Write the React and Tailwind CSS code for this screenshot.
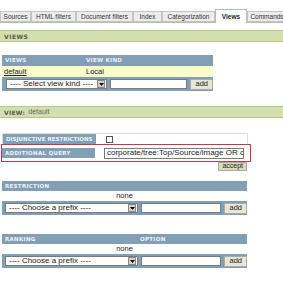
import React from "react";

const font = { fontFamily: "'Liberation Sans', Arial, sans-serif" };
const hfont = { fontFamily: "'DejaVu Sans', Verdana, sans-serif" };

function Tab({ label, active, w }) {
  return (
    <div
      className={
        active
          ? "h-[14px] bg-white border border-b-0 border-[#b9b9b9] flex items-center justify-center text-[6.5px] font-bold text-[#222] shrink-0 -mb-px whitespace-nowrap"
          : "h-[11px] bg-[#ececec] border border-[#c4c4c4] flex items-center justify-center text-[6.5px] text-[#333] shrink-0 whitespace-nowrap"
      }
      style={{ width: w }}
    >
      {label}
    </div>
  );
}

function FakeSelect({ label, w }) {
  return (
    <div className="h-[10px] bg-white border border-[#7a7a7a] flex items-center justify-between shrink-0" style={{ width: w }}>
      <span className="text-[8px] text-[#222] pl-[3px] leading-none whitespace-nowrap">{label}</span>
      <div className="h-[8px] w-[8px] bg-[#d6d3ce] border border-[#888] flex items-center justify-center mr-px">
        <svg width="5" height="3" viewBox="0 0 5 3"><path d="M0 0h5L2.5 3z" fill="#111" /></svg>
      </div>
    </div>
  );
}

function AddBtn({ label = "add" }) {
  return (
    <div className="h-[11px] px-[4px] bg-[#e8e6d4] border border-[#aaa] flex items-center text-[7.5px] text-[#222] shrink-0">{label}</div>
  );
}

function GreenBar({ children }) {
  return (
    <div className="h-[12px] bg-[#d3dfae] border-t border-b border-[#b7c68d] flex items-center pl-[4px] whitespace-nowrap">
      {children}
    </div>
  );
}

const H = "text-[5.5px] font-bold text-[#eef2f5] tracking-[0.3px] whitespace-nowrap";
const H2 = "text-[5.5px] font-bold text-[#eef2f5] tracking-[0px] whitespace-nowrap";

export default function App() {
  return (
    <div className="w-[283px] h-[299px] bg-white overflow-hidden" style={font}>
      <div className="pt-[8px]">
        <div className="flex items-end border-b border-[#b9b9b9] h-[15px]">
          <Tab label="Sources" w={31} />
          <Tab label="HTML filters" w={45} />
          <Tab label="Document filters" w={57} />
          <Tab label="Index" w={29} />
          <Tab label="Categorization" w={53} />
          <Tab label="Views" w={32} active />
          <Tab label="Commands" w={40} />
        </div>
      </div>

      <div className="mt-[7px]">
        <GreenBar>
          <span className="font-bold tracking-[0.5px] text-[#5a5a4a] text-[6px]" style={hfont}>VIEWS</span>
        </GreenBar>
      </div>

      <div className="mt-[13px] ml-[2px] w-[211px] bg-[#839fb6]">
        <div className="h-[11px] flex items-center" style={hfont}>
          <span className={"pl-[3px] w-[84px] " + H}>VIEWS</span>
          <span className={H}>VIEW KIND</span>
        </div>
        <div className="h-[11px] flex items-center bg-[#f8fdc9] text-[7.5px] text-[#222]">
          <span className="pl-[2px] w-[84px] underline">default</span>
          <span>Local</span>
        </div>
        <div className="h-[14px] flex items-center gap-[3px] pl-[4px]">
          <FakeSelect label="---- Select view kind ----" w={101} />
          <div className="h-[10px] w-[83px] bg-white border border-[#7a7a7a]" />
          <AddBtn />
        </div>
      </div>

      <div className="mt-[15px]">
        <GreenBar>
          <span className="font-bold text-[#5a5a4a] tracking-[0.3px] text-[6px]" style={hfont}>VIEW:</span>
          <span className="ml-[3px] text-[#666] text-[7px]">default</span>
        </GreenBar>
      </div>

      <div className="mt-[15px] ml-[1px] w-[250px]">
        <div className="ml-[1px] w-[246px] border border-[#dcdcdc] border-b-0 h-[11px] flex items-center">
          <div className={"w-[93px] h-full bg-[#839fb6] flex items-center pl-[3px] overflow-hidden " + H2} style={hfont}>DISJUNCTIVE RESTRICTIONS</div>
          <div className="ml-[10px] w-[7px] h-[7px] border border-[#555] bg-white" />
        </div>
        <div className="h-[18px] border-[1.5px] border-[#c23a48] flex items-center">
          <div className={"w-[93px] h-[10px] bg-[#839fb6] flex items-center pl-[3px] " + H} style={hfont}>ADDITIONAL QUERY</div>
          <div className="ml-[9px] h-[11px] w-[140px] bg-white border border-[#7a7a7a] flex items-center overflow-hidden">
            <span className="text-[8px] text-[#222] pl-[2px] whitespace-nowrap leading-none">corporate/tree:Top/Source/image OR c</span>
          </div>
        </div>
        <div className="flex justify-end pr-[4px]">
          <div className="h-[9px] px-[3px] bg-[#d6dcb8] border border-[#aaa] flex items-center text-[7px] text-[#222]">accept</div>
        </div>
      </div>

      <div className="mt-[10px] ml-[2px] w-[245px]">
        <div className={"h-[10px] bg-[#839fb6] flex items-center pl-[3px] " + H} style={hfont}>RESTRICTION</div>
        <div className="h-[10px] flex items-center justify-center text-[7.5px] text-[#222]">none</div>
        <div className="h-[14px] bg-[#839fb6] flex items-center gap-[3px] pl-[3px]">
          <FakeSelect label="---- Choose a prefix ----" w={133} />
          <div className="h-[10px] w-[83px] bg-white border border-[#7a7a7a]" />
          <AddBtn />
        </div>
      </div>

      <div className="mt-[19px] ml-[2px] w-[245px]">
        <div className="h-[10px] bg-[#839fb6] flex items-center" style={hfont}>
          <span className={"pl-[3px] w-[138px] " + H}>RANKING</span>
          <span className={H}>OPTION</span>
        </div>
        <div className="h-[10px] flex items-center justify-center text-[7.5px] text-[#222]">none</div>
        <div className="h-[14px] bg-[#839fb6] flex items-center gap-[3px] pl-[3px]">
          <FakeSelect label="---- Choose a prefix ----" w={133} />
          <div className="h-[10px] w-[83px] bg-white border border-[#7a7a7a]" />
          <AddBtn />
        </div>
      </div>
    </div>
  );
}
